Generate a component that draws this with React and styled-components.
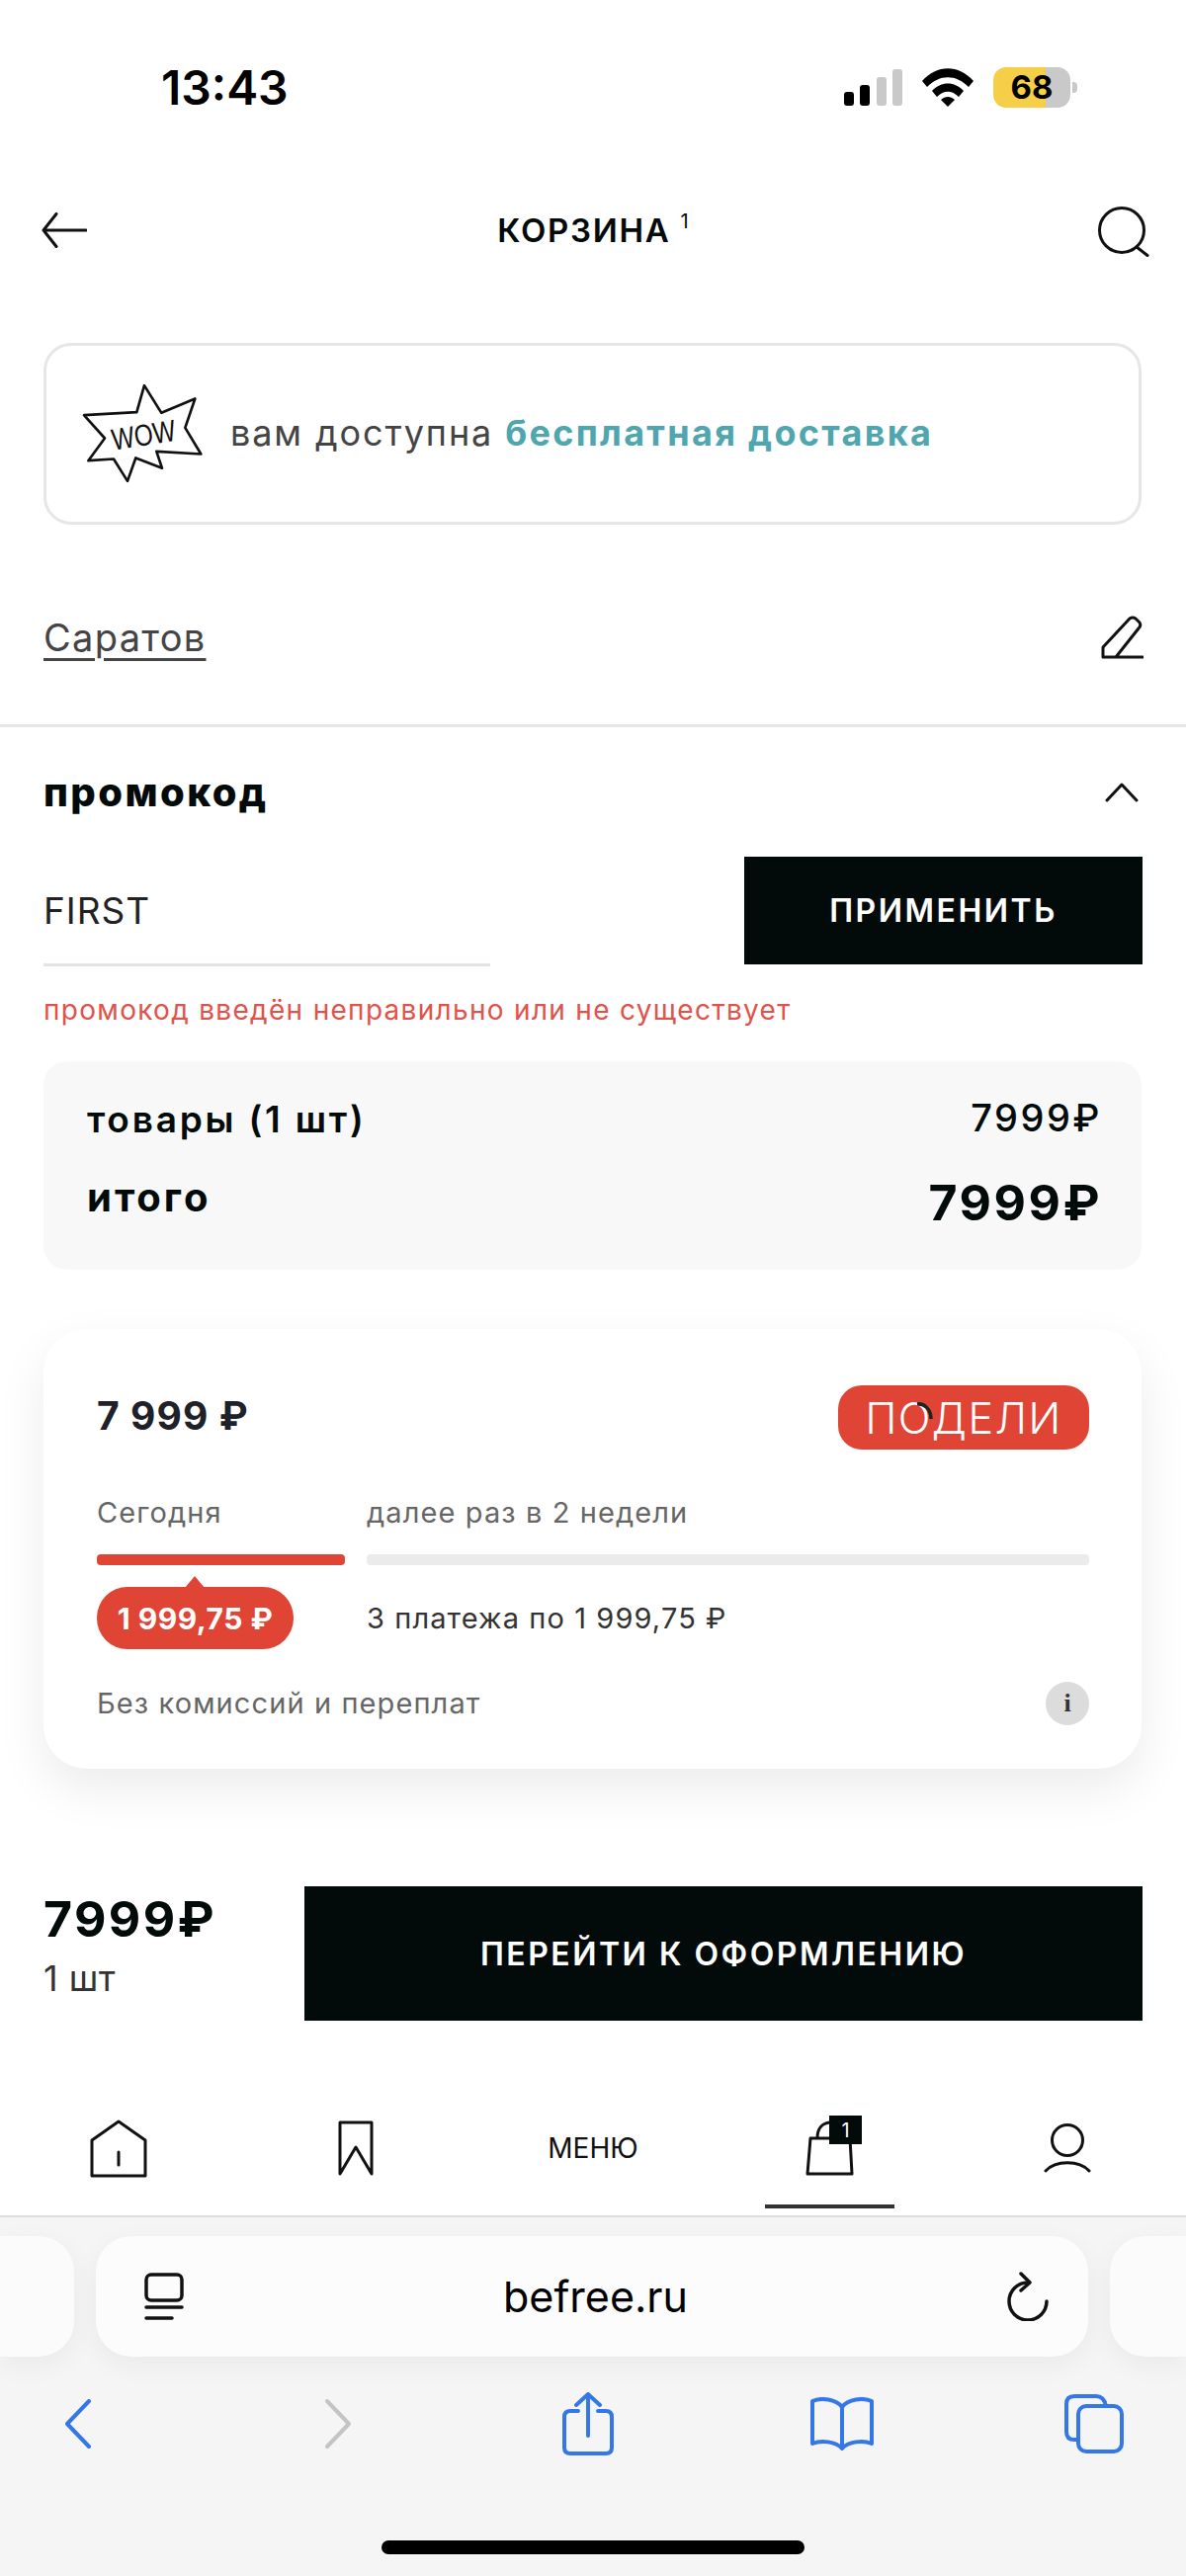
import React from "react";
import styled, { createGlobalStyle } from "styled-components";

const GlobalStyle = createGlobalStyle`
  html, body {
    margin: 0;
    padding: 0;
    background: #fff;
  }
  * {
    box-sizing: border-box;
  }
`;

const Page = styled.div`
  width: 1200px;
  height: 2607px;
  overflow: hidden;
  background: #fff;
  font-family: Inter, "Noto Sans", sans-serif;
  color: #030a0a;
  display: flex;
  flex-direction: column;
`;

const StatusBar = styled.div`
  height: 176px;
  flex: none;
  padding: 0 117px 0 163px;
  display: flex;
  align-items: center;
  justify-content: space-between;
`;

const Time = styled.div`
  font-size: 48px;
  font-weight: 600;
  color: #000;
`;

const StatusIcons = styled.div`
  display: flex;
  align-items: center;
  gap: 20px;
`;

const Battery = styled.div`
  position: relative;
  width: 78px;
  height: 41px;
  border-radius: 13px;
  background: linear-gradient(90deg, #f5cf47 0 53px, #c9c9c9 53px);
  display: flex;
  align-items: center;
  justify-content: center;
  font-size: 33px;
  font-weight: 700;
  color: #000;

  &::after {
    content: "";
    position: absolute;
    right: -7px;
    top: 15px;
    width: 5px;
    height: 11px;
    border-radius: 0 4px 4px 0;
    background: #c9c9c9;
  }
`;

const Header = styled.div`
  height: 114px;
  flex: none;
  padding: 0 36px 0 42px;
  display: grid;
  grid-template-columns: 1fr auto 1fr;
  align-items: center;

  svg:last-child {
    justify-self: end;
  }
`;

const Title = styled.div`
  font-size: 33px;
  font-weight: 600;
  letter-spacing: 1.7px;
  padding-right: 6px;

  sup {
    font-size: 20px;
    font-weight: 400;
    margin-left: 10px;
    vertical-align: 14px;
    line-height: 0;
    letter-spacing: 0;
  }
`;

const Banner = styled.div`
  margin: 57px 45px 0 44px;
  height: 184px;
  flex: none;
  border: 3px solid #e6e6e6;
  border-radius: 28px;
  padding-left: 33px;
  display: flex;
  align-items: center;
  gap: 23px;
`;

const BannerText = styled.div`
  font-size: 36px;
  color: #444;
  letter-spacing: 1.9px;
  margin-bottom: 3px;

  b {
    font-weight: 700;
    color: #4fa6ae;
    letter-spacing: 2.3px;
  }
`;

const CityRow = styled.div`
  height: 205px;
  flex: none;
  padding: 26px 43px 0 44px;
  border-bottom: 3px solid #e6e6e6;
  display: flex;
  align-items: center;
  justify-content: space-between;
`;

const City = styled.div`
  font-size: 38px;
  color: #444;
  text-decoration: underline;
  text-decoration-thickness: 3px;
  text-underline-offset: 7px;
  letter-spacing: 1.3px;
`;

const PromoHead = styled.div`
  height: 131px;
  flex: none;
  padding: 0 48px 0 44px;
  display: flex;
  align-items: center;
  justify-content: space-between;
`;

const PromoTitle = styled.div`
  font-size: 40px;
  font-weight: 800;
  letter-spacing: 2.4px;
`;

const PromoRow = styled.div`
  height: 109px;
  flex: none;
  padding: 0 44px;
  display: flex;
  justify-content: space-between;
`;

const PromoInput = styled.div`
  width: 452px;
  height: 111px;
  border-bottom: 3px solid #e3e3e3;
  display: flex;
  align-items: center;
  font-size: 37px;
  letter-spacing: 1px;
  color: #222;
`;

const BlackButton = styled.div`
  width: ${(p) => p.$width}px;
  background: #030a0a;
  color: #fff;
  font-size: 32px;
  font-weight: 600;
  letter-spacing: 2.5px;
  display: flex;
  align-items: center;
  justify-content: center;
`;

const PromoError = styled.div`
  margin: 26px 44px 0;
  height: 40px;
  line-height: 40px;
  font-size: 28px;
  color: #e0524a;
  letter-spacing: 1.3px;
  flex: none;
`;

const Summary = styled.div`
  margin: 32px 45px 0 44px;
  height: 211px;
  flex: none;
  padding: 30px 40px 0 44px;
  background: #f8f8f8;
  border-radius: 24px;
  display: flex;
  flex-direction: column;
  gap: 23px;
`;

const SummaryRow = styled.div`
  height: 60px;
  display: flex;
  align-items: center;
  justify-content: space-between;
`;

const SummaryLabel = styled.div`
  font-size: ${(p) => p.$size}px;
  font-weight: ${(p) => p.$weight};
  letter-spacing: ${(p) => p.$spacing}px;
  margin-bottom: ${(p) => p.$lift || 0}px;
`;

const Price = styled.div`
  font-size: ${(p) => p.$size}px;
  font-weight: ${(p) => p.$weight};
  letter-spacing: 2.5px;
  margin-bottom: ${(p) => p.$lift || 0}px;
`;

const PayCard = styled.div`
  margin: 60px 45px 0 44px;
  height: 445px;
  flex: none;
  padding: 57px 53px 0 54px;
  background: #fff;
  border-radius: 44px;
  box-shadow: 0 20px 50px rgba(0, 0, 0, 0.08);
  display: flex;
  flex-direction: column;
`;

const PayTop = styled.div`
  height: 65px;
  flex: none;
  display: flex;
  align-items: center;
  justify-content: space-between;
`;

const PayAmount = styled.div`
  font-size: 39px;
  font-weight: 700;
  letter-spacing: 1.1px;
  color: #1e2128;
  margin-bottom: 4px;
`;

const PoweredLogo = styled.div`
  position: relative;
  width: 254px;
  height: 65px;
  border-radius: 24px;
  background: #e04434;
  color: #fff;
  font-size: 43px;
  font-weight: 300;
  letter-spacing: 1.5px;
  display: flex;
  align-items: center;
  justify-content: center;

  svg {
    position: absolute;
    left: 79px;
    top: 17px;
  }
`;

const PayGrid = styled.div`
  display: grid;
  grid-template-columns: 251px 1fr;
  column-gap: 22px;
  margin-top: ${(p) => p.$top}px;
  align-items: center;
`;

const PayLabel = styled.div`
  height: 40px;
  line-height: 40px;
  font-size: 29px;
  letter-spacing: 1.1px;
  color: ${(p) => p.$color || "#666"};
`;

const Progress = styled.div`
  height: 11px;
  border-radius: 4px;
  background: ${(p) => (p.$active ? "#e04434" : "#ebebeb")};
`;

const Pill = styled.div`
  position: relative;
  width: 199px;
  height: 63px;
  border-radius: 31px;
  background: #e04434;
  color: #fff;
  font-size: 30px;
  font-weight: 700;
  letter-spacing: 0.5px;
  display: flex;
  align-items: center;
  justify-content: center;

  &::before {
    content: "";
    position: absolute;
    left: 89px;
    top: -11px;
    border-left: 10px solid transparent;
    border-right: 10px solid transparent;
    border-bottom: 12px solid #e04434;
  }
`;

const PayFooter = styled.div`
  margin-top: 35px;
  height: 40px;
  display: flex;
  align-items: center;
  justify-content: space-between;
`;

const InfoDot = styled.div`
  width: 44px;
  height: 44px;
  border-radius: 50%;
  background: #dcdcdc;
  color: #333;
  font-family: "Liberation Serif", serif;
  font-size: 26px;
  font-weight: 700;
  display: flex;
  align-items: center;
  justify-content: center;
`;

const Checkout = styled.div`
  margin-top: 119px;
  height: 136px;
  flex: none;
  padding: 0 44px;
  display: flex;
  justify-content: space-between;
`;

const CheckoutInfo = styled.div`
  padding-top: 3px;
`;

const CheckoutPrice = styled.div`
  height: 60px;
  line-height: 60px;
  font-size: 50px;
  font-weight: 700;
  letter-spacing: 2.4px;
`;

const CheckoutCount = styled.div`
  margin-top: 10px;
  height: 40px;
  line-height: 40px;
  font-size: 36px;
  letter-spacing: 0.5px;
  color: #333;
`;

const TabBar = styled.div`
  height: 197px;
  flex: none;
  padding-top: 61px;
  display: grid;
  grid-template-columns: repeat(5, 1fr);
  align-items: center;
  justify-items: center;
  position: relative;
`;

const TabItem = styled.div`
  position: relative;
  display: flex;
  align-items: center;
  justify-content: center;
`;

const MenuLabel = styled.div`
  font-size: 28px;
  color: #111;
`;

const BagBadge = styled.div`
  position: absolute;
  left: 24px;
  top: -5px;
  width: 33px;
  height: 29px;
  background: #030a0a;
  color: #fff;
  font-size: 20px;
  display: flex;
  align-items: center;
  justify-content: center;
`;

const TabMarker = styled.div`
  position: absolute;
  left: 774px;
  bottom: 7px;
  width: 131px;
  height: 4px;
  background: #333;
`;

const Safari = styled.div`
  flex: 1;
  background: #f5f5f6;
  border-top: 2px solid #ddd;
  padding-top: 19px;
  display: flex;
  flex-direction: column;
`;

const TabStrip = styled.div`
  height: 122px;
  flex: none;
  display: grid;
  grid-template-columns: 75px 1004px 1fr;
  column-gap: 22px;
`;

const SideTab = styled.div`
  background: #fbfbfb;
  border-radius: ${(p) => (p.$left ? "0 36px 36px 0" : "36px 0 0 36px")};
  box-shadow: 0 8px 28px rgba(0, 0, 0, 0.05);
`;

const UrlBar = styled.div`
  background: #fcfcfc;
  border-radius: 36px;
  box-shadow: 0 8px 28px rgba(0, 0, 0, 0.05);
  padding: 0 40px 0 49px;
  display: flex;
  align-items: center;
  justify-content: space-between;
`;

const UrlText = styled.div`
  font-size: 43px;
  color: #000;
`;

const Toolbar = styled.div`
  margin-top: 18px;
  height: 100px;
  flex: none;
  padding-left: 65px;
  display: grid;
  grid-template-columns: 264px 240px 250px 258px 60px;
  align-items: center;
`;

const HomeIndicator = styled.div`
  margin: 68px auto 0;
  width: 428px;
  height: 14px;
  border-radius: 7px;
  background: #000;
  flex: none;
`;

const Line = (props) => (
  <svg fill="none" stroke="#111" strokeWidth="3" strokeLinecap="round" strokeLinejoin="round" {...props} />
);

const Blue = (props) => (
  <svg fill="none" stroke="#3478e8" strokeWidth="4" strokeLinecap="round" strokeLinejoin="round" {...props} />
);

const SignalIcon = () => (
  <svg width="59" height="37" viewBox="0 0 59 37">
    <rect x="0" y="23" width="10" height="14" rx="3" fill="#000" />
    <rect x="16" y="16" width="10" height="21" rx="3" fill="#000" />
    <rect x="33" y="8" width="10" height="29" rx="3" fill="#c9c9c9" />
    <rect x="49" y="0" width="10" height="37" rx="3" fill="#c9c9c9" />
  </svg>
);

const WifiIcon = () => (
  <svg width="52" height="39" viewBox="0 0 52 39">
    <path d="M0 13 C15 -4 37 -4 52 13 L47 19 C34 6 18 6 5 19 Z" fill="#000" />
    <path d="M10 23 C19 13 33 13 42 23 L37 29 C30 22 22 22 15 29 Z" fill="#000" />
    <path d="M19 32 C23 28 29 28 33 32 L26 39 Z" fill="#000" />
  </svg>
);

const WowIcon = () => (
  <svg width="130" height="107" viewBox="60 50 390 320" fill="none">
    <path
      d="M258 62 L310 145 L412 102 L382 190 L430 270 L295 262 L312 313 L232 282 L207 352 L165 285 L88 290 L138 222 L75 152 L235 143 Z"
      stroke="#111"
      strokeWidth="8"
      strokeLinejoin="round"
    />
    <text
      x="158"
      y="245"
      transform="rotate(-9 250 210)"
      fontFamily="'Liberation Sans', sans-serif"
      fontSize="92"
      textLength="195"
      lengthAdjust="spacingAndGlyphs"
      fill="#111"
    >
      WOW
    </text>
  </svg>
);

const PayArc = () => (
  <svg width="18" height="20" viewBox="0 0 18 20" fill="none">
    <path d="M1 2 C8 1 15 7 15 17" stroke="#222" strokeWidth="3.5" />
  </svg>
);

const App = () => (
  <Page>
    <GlobalStyle />

    <StatusBar>
      <Time>13:43</Time>
      <StatusIcons>
        <SignalIcon />
        <WifiIcon />
        <Battery>68</Battery>
      </StatusIcons>
    </StatusBar>

    <Header>
      <Line width="46" height="36" viewBox="0 0 46 36">
        <path d="M45 18 H2 M15 1.5 L2 18 L15 34.5" />
      </Line>
      <Title>
        КОРЗИНА<sup>1</sup>
      </Title>
      <Line width="53" height="53" viewBox="0 0 53 53">
        <circle cx="24" cy="26" r="22.5" />
        <path d="M39 43 L50 51.5" />
      </Line>
    </Header>

    <Banner>
      <WowIcon />
      <BannerText>
        вам доступна <b>бесплатная доставка</b>
      </BannerText>
    </Banner>

    <CityRow>
      <City>Саратов</City>
      <Line width="43" height="44" viewBox="0 0 43 44">
        <path d="M2 42 V32 L29 3 Q32 1 35 3 L39 7 Q41 10 38 13 L15 42 M2 42 H42" />
      </Line>
    </CityRow>

    <PromoHead>
      <PromoTitle>промокод</PromoTitle>
      <Line width="34" height="20" viewBox="0 0 34 20">
        <path d="M2 18 L17 2 L32 18" />
      </Line>
    </PromoHead>

    <PromoRow>
      <PromoInput>FIRST</PromoInput>
      <BlackButton $width={403}>ПРИМЕНИТЬ</BlackButton>
    </PromoRow>

    <PromoError>промокод введён неправильно или не существует</PromoError>

    <Summary>
      <SummaryRow>
        <SummaryLabel $size={37} $weight={600} $spacing={2.8} $lift={3}>
          товары (1 шт)
        </SummaryLabel>
        <Price $size={38} $weight={500} $lift={6}>
          7999₽
        </Price>
      </SummaryRow>
      <SummaryRow>
        <SummaryLabel $size={40} $weight={700} $spacing={3} $lift={12}>
          итого
        </SummaryLabel>
        <Price $size={50} $weight={700}>
          7999₽
        </Price>
      </SummaryRow>
    </Summary>

    <PayCard>
      <PayTop>
        <PayAmount>7 999 ₽</PayAmount>
        <PoweredLogo>
          ПОДЕЛИ
          <PayArc />
        </PoweredLogo>
      </PayTop>
      <PayGrid $top={44}>
        <PayLabel>Сегодня</PayLabel>
        <PayLabel>далее раз в 2 недели</PayLabel>
      </PayGrid>
      <PayGrid $top={22}>
        <Progress $active />
        <Progress />
      </PayGrid>
      <PayGrid $top={22}>
        <Pill>1 999,75 ₽</Pill>
        <PayLabel $color="#333">3 платежа по 1 999,75 ₽</PayLabel>
      </PayGrid>
      <PayFooter>
        <PayLabel>Без комиссий и переплат</PayLabel>
        <InfoDot>i</InfoDot>
      </PayFooter>
    </PayCard>

    <Checkout>
      <CheckoutInfo>
        <CheckoutPrice>7999₽</CheckoutPrice>
        <CheckoutCount>1 шт</CheckoutCount>
      </CheckoutInfo>
      <BlackButton $width={848}>ПЕРЕЙТИ К ОФОРМЛЕНИЮ</BlackButton>
    </Checkout>

    <TabBar>
      <Line width="58" height="59" viewBox="0 0 58 59">
        <path d="M2 21 L29 2 L56 21 V57 H2 Z M29 33 V46" />
      </Line>
      <Line width="36" height="56" viewBox="0 0 36 56">
        <path d="M2 2 H34 V54 L18 27 L2 54 Z" />
      </Line>
      <MenuLabel>МЕНЮ</MenuLabel>
      <TabItem>
        <Line width="50" height="56" viewBox="0 0 50 56">
          <path d="M5 18 H45 L47 54 H2 Z M12 18 C12 8 17 2 26 2" />
        </Line>
        <BagBadge>1</BagBadge>
      </TabItem>
      <Line width="48" height="50" viewBox="0 0 48 50">
        <circle cx="24" cy="17" r="15.5" />
        <path d="M2 48 C12 37 36 37 46 48" />
      </Line>
      <TabMarker />
    </TabBar>

    <Safari>
      <TabStrip>
        <SideTab $left />
        <UrlBar>
          <svg width="40" height="48" viewBox="0 0 40 48" fill="none" stroke="#111" strokeWidth="3.5" strokeLinecap="round">
            <rect x="2" y="2" width="36" height="26" rx="5" />
            <path d="M2 35 H38 M2 46 H28" />
          </svg>
          <UrlText>befree.ru</UrlText>
          <svg width="42" height="50" viewBox="0 0 42 50" fill="none" stroke="#111" strokeWidth="3.5" strokeLinecap="round" strokeLinejoin="round">
            <path d="M21 11 A19 19 0 1 0 40 30" />
            <path d="M14 2 L23 11 L14 19" />
          </svg>
        </UrlBar>
        <SideTab />
      </TabStrip>

      <Toolbar>
        <Blue width="27" height="50" viewBox="0 0 27 50">
          <path d="M25 2 L3 25 L25 48" />
        </Blue>
        <Blue width="27" height="50" viewBox="0 0 27 50" stroke="#c4c4c4">
          <path d="M2 2 L24 25 L2 48" />
        </Blue>
        <Blue width="52" height="64" viewBox="0 0 52 64">
          <path d="M16 19 H8 Q2 19 2 25 V56 Q2 62 8 62 H44 Q50 62 50 56 V25 Q50 19 44 19 H36 M26 44 V3 M14 13 L26 2 L38 13" />
        </Blue>
        <Blue width="66" height="54" viewBox="0 0 66 54">
          <path d="M33 10 C27 2 12 0 3 4 V47 C12 43 27 45 33 52 C39 45 54 43 63 47 V4 C54 0 39 2 33 10 Z M33 10 V50" />
        </Blue>
        <Blue width="60" height="60" viewBox="0 0 60 60">
          <path d="M14 46 H10 Q2 46 2 38 V10 Q2 2 10 2 H32 Q40 2 42 12" />
          <rect x="14" y="12" width="44" height="46" rx="8" />
        </Blue>
      </Toolbar>

      <HomeIndicator />
    </Safari>
  </Page>
);

export default App;
